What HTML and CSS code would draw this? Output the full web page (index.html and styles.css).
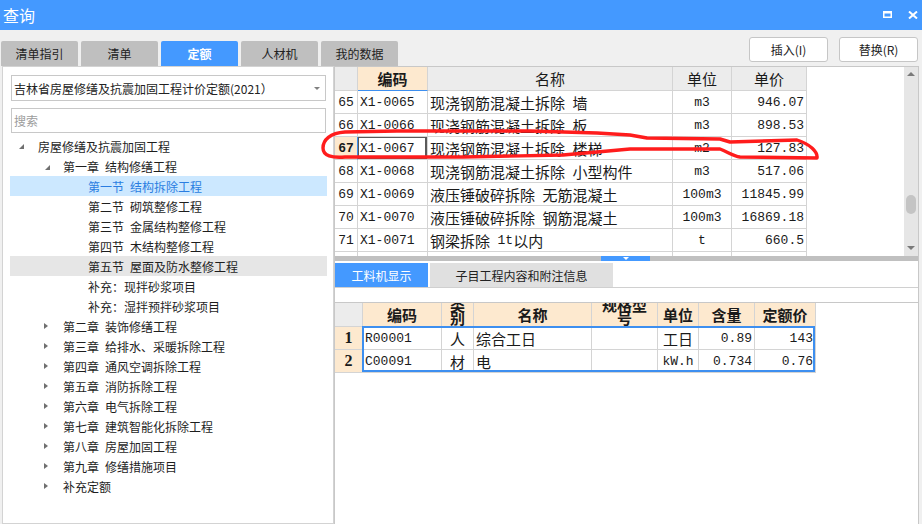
FILE: index.html
```html
<!DOCTYPE html>
<html lang="zh-CN">
<head>
<meta charset="utf-8">
<title>查询</title>
<link rel="stylesheet" href="styles.css">
</head>
<body>
<header class="titlebar">
  <span class="title">查询</span>
  <div class="winbtns">
    <svg class="wicon" width="9" height="7" viewBox="0 0 9 7"><path fill="#fff" fill-rule="evenodd" d="M0 0H9V7H0Z M1.5 2.5V5.5H7.5V2.5Z"/></svg>
    <svg class="wicon" width="10" height="8" viewBox="0 0 10 8"><path d="M1 0.5L9 7.5M9 0.5L1 7.5" stroke="#fff" stroke-width="2"/></svg>
  </div>
</header>
<div class="toolbar">
  <nav class="tabs">
    <div class="tab">清单指引</div>
    <div class="tab">清单</div>
    <div class="tab active">定额</div>
    <div class="tab">人材机</div>
    <div class="tab">我的数据</div>
  </nav>
  <div class="actions">
    <button class="btn">插入(I)</button>
    <button class="btn">替换(R)</button>
  </div>
</div>
<main class="content">
  <aside class="left">
    <div class="select"><span>吉林省房屋修缮及抗震加固工程计价定额(2021）</span><i class="caret"></i></div>
    <div class="search">搜索</div>
    <ul class="tree">
      <li class="node l0"><i class="tw open"></i>房屋修缮及抗震加固工程</li>
      <li class="node l1"><i class="tw open"></i>第一章&ensp;结构修缮工程</li>
      <li class="node l2 sel"><i class="tw"></i>第一节&ensp;结构拆除工程</li>
      <li class="node l2"><i class="tw"></i>第二节&ensp;砌筑整修工程</li>
      <li class="node l2"><i class="tw"></i>第三节&ensp;金属结构整修工程</li>
      <li class="node l2"><i class="tw"></i>第四节&ensp;木结构整修工程</li>
      <li class="node l2 hover"><i class="tw"></i>第五节&ensp;屋面及防水整修工程</li>
      <li class="node l2"><i class="tw"></i>补充：现拌砂浆项目</li>
      <li class="node l2"><i class="tw"></i>补充：湿拌预拌砂浆项目</li>
      <li class="node l1"><i class="tw closed"></i>第二章&ensp;装饰修缮工程</li>
      <li class="node l1"><i class="tw closed"></i>第三章&ensp;给排水、采暖拆除工程</li>
      <li class="node l1"><i class="tw closed"></i>第四章&ensp;通风空调拆除工程</li>
      <li class="node l1"><i class="tw closed"></i>第五章&ensp;消防拆除工程</li>
      <li class="node l1"><i class="tw closed"></i>第六章&ensp;电气拆除工程</li>
      <li class="node l1"><i class="tw closed"></i>第七章&ensp;建筑智能化拆除工程</li>
      <li class="node l1"><i class="tw closed"></i>第八章&ensp;房屋加固工程</li>
      <li class="node l1"><i class="tw closed"></i>第九章&ensp;修缮措施项目</li>
      <li class="node l1"><i class="tw closed"></i>补充定额</li>
    </ul>
  </aside>
  <section class="right">
    <div class="upper">
      <div class="grid1">
        <div class="r1 head">
          <div class="c rn"></div>
          <div class="c hcur">编码</div>
          <div class="c">名称</div>
          <div class="c">单位</div>
          <div class="c">单价</div>
        </div>
        <div class="r1">
          <div class="c rn mono">65</div>
          <div class="c l mono">X1-0065</div>
          <div class="c l">现浇钢筋混凝土拆除&ensp;墙</div>
          <div class="c mono">m3</div>
          <div class="c r mono">946.07</div>
        </div>
        <div class="r1">
          <div class="c rn mono">66</div>
          <div class="c l mono">X1-0066</div>
          <div class="c l">现浇钢筋混凝土拆除&ensp;板</div>
          <div class="c mono">m3</div>
          <div class="c r mono">898.53</div>
        </div>
        <div class="r1">
          <div class="c rn mono cur">67</div>
          <div class="c l mono focus">X1-0067</div>
          <div class="c l">现浇钢筋混凝土拆除&ensp;楼梯</div>
          <div class="c mono">m2</div>
          <div class="c r mono">127.83</div>
        </div>
        <div class="r1">
          <div class="c rn mono">68</div>
          <div class="c l mono">X1-0068</div>
          <div class="c l">现浇钢筋混凝土拆除&ensp;小型构件</div>
          <div class="c mono">m3</div>
          <div class="c r mono">517.06</div>
        </div>
        <div class="r1">
          <div class="c rn mono">69</div>
          <div class="c l mono">X1-0069</div>
          <div class="c l">液压锤破碎拆除&ensp;无筋混凝土</div>
          <div class="c mono">100m3</div>
          <div class="c r mono">11845.99</div>
        </div>
        <div class="r1">
          <div class="c rn mono">70</div>
          <div class="c l mono">X1-0070</div>
          <div class="c l">液压锤破碎拆除&ensp;钢筋混凝土</div>
          <div class="c mono">100m3</div>
          <div class="c r mono">16869.18</div>
        </div>
        <div class="r1">
          <div class="c rn mono">71</div>
          <div class="c l mono">X1-0071</div>
          <div class="c l">钢梁拆除&ensp;<span class="mono">1t</span>以内</div>
          <div class="c mono">t</div>
          <div class="c r mono">660.5</div>
        </div>
        <div class="r1">
          <div class="c rn"></div><div class="c"></div><div class="c"></div><div class="c"></div><div class="c"></div>
        </div>
      </div>
      <div class="vscroll"><i class="arr up"></i><i class="thumb"></i><i class="arr down"></i></div>
    </div>
    <div class="splitter"><div class="grip"></div></div>
    <div class="lower">
      <div class="subtabs">
        <div class="stab active">工料机显示</div>
        <div class="stab wide">子目工程内容和附注信息</div>
      </div>
      <div class="strip"></div>
      <div class="grid2">
        <div class="r2 head">
          <div class="c rn"></div>
          <div class="c">编码</div>
          <div class="c wrap">类别</div>
          <div class="c">名称</div>
          <div class="c wrap">规格型号</div>
          <div class="c">单位</div>
          <div class="c">含量</div>
          <div class="c">定额价</div>
        </div>
        <div class="r2">
          <div class="c rn num">1</div>
          <div class="c l mono">R00001</div>
          <div class="c">人</div>
          <div class="c l">综合工日</div>
          <div class="c"></div>
          <div class="c">工日</div>
          <div class="c r mono">0.89</div>
          <div class="c r mono">143</div>
        </div>
        <div class="r2">
          <div class="c rn num">2</div>
          <div class="c l mono">C00091</div>
          <div class="c">材</div>
          <div class="c l">电</div>
          <div class="c"></div>
          <div class="c mono">kW.h</div>
          <div class="c r mono">0.734</div>
          <div class="c r mono">0.76</div>
        </div>
        <div class="selframe"></div>
      </div>
    </div>
  </section>
</main>
<svg class="annot" width="922" height="524" viewBox="0 0 922 524">
  <path d="M630 135 L597 133 L530 131 L397 131 L345 132 C330 133 323 140 323 148 C323 156 332 158 345 157 L463 157 L563 155 L597 152 L630 149 L720 149 C728 152 733 156 740 157 L817 158 C818 152 810 144 797 140 L730 142 L720 139 L647 138 Z" fill="none" stroke="#ff1c1c" stroke-width="3.4" stroke-linejoin="round" stroke-linecap="round"/>
</svg>
</body>
</html>
```

FILE: styles.css
```css
* { box-sizing: border-box; margin: 0; padding: 0; }
html, body { width: 922px; height: 524px; }
body {
  position: relative;
  overflow: hidden;
  background: #f0f0f0;
  font-family: "Noto Sans CJK SC", "Noto Sans", sans-serif;
  color: #1e1e1e;
}

/* title bar */
.titlebar {
  height: 30px;
  background: #4499ff;
  display: flex;
  align-items: center;
  justify-content: space-between;
  padding: 0 4px 0 3px;
}
.title { color: #fff; font-size: 16px; line-height: 1; }
.winbtns { display: flex; align-items: center; gap: 16px; margin-top: -1px; }
.wicon { display: block; }

/* tab strip + buttons */
.toolbar {
  height: 36px;
  display: flex;
  justify-content: space-between;
  align-items: flex-start;
  padding: 0 4px 0 1px;
}
.tabs { display: flex; gap: 3px; margin-top: 11px; }
.tab {
  width: 77px;
  height: 25px;
  background: #bfbfbf;
  border-radius: 2px 2px 0 0;
  font-size: 12px;
  display: flex;
  align-items: center;
  justify-content: center;
  color: #222;
}
.tab.active { background: #4499ff; color: #fff; font-weight: 700; }
.actions { display: flex; gap: 11px; margin-top: 7px; }
.btn {
  width: 79px;
  height: 25px;
  background: #fff;
  border: 1px solid #c6c6c6;
  border-radius: 3px;
  font-family: inherit;
  font-size: 12px;
  color: #222;
}

/* main area */
.content { display: flex; height: 458px; }

.left {
  width: 332px;
  margin-left: 2px;
  background: #fff;
  border: 1px solid #d3d3d3;
  padding: 8px 7px 0 8px;
  flex: none;
}
.select {
  height: 26px;
  border: 1px solid #c8c8c8;
  padding: 0 5px 0 2px;
  font-size: 12px;
  display: flex;
  align-items: center;
  justify-content: space-between;
  color: #222;
}
.caret {
  width: 0; height: 0;
  border-top: 3px solid #808080;
  border-left: 3px solid transparent;
  border-right: 3px solid transparent;
}
.search {
  margin-top: 7px;
  height: 25px;
  border: 1px solid #c8c8c8;
  padding-left: 2px;
  font-size: 12px;
  color: #9c9c9c;
  display: flex;
  align-items: center;
}
.tree { list-style: none; margin: 3px -1px 0 -1px; }
.node {
  height: 20px;
  display: flex;
  align-items: center;
  font-size: 12px;
  color: #1e1e1e;
  white-space: nowrap;
}
.node.l0 { padding-left: 5px; }
.node.l1 { padding-left: 30px; }
.node.l2 { padding-left: 55px; }
.node.sel { background: #cce8ff; color: #2a7de1; }
.node.hover { background: #e6e6e6; }
.tw { width: 23px; height: 20px; position: relative; flex: none; }
.tw.open::before {
  content: "";
  position: absolute;
  left: 4px; top: 8px;
  border-bottom: 5px solid #707070;
  border-left: 5px solid transparent;
}
.l1 .tw.open::before { left: 5px; top: 9px; }
.tw.closed::before {
  content: "";
  position: absolute;
  left: 4px; top: 7px;
  border-left: 4px solid #707070;
  border-top: 3.5px solid transparent;
  border-bottom: 3.5px solid transparent;
}

/* right side */
.right {
  width: 585px;
  border-left: 1px solid #c8c8c8;
  border-right: 1px solid #c8c8c8;
  display: flex;
  flex-direction: column;
  flex: none;
}
.upper {
  height: 190px;
  border-top: 1px solid #c8c8c8;
  background: #fff;
  display: flex;
}
.grid1 { flex: 1; overflow: hidden; }
.r1 {
  display: grid;
  grid-template-columns: 23px 70px 245px 59px 75px;
  height: 23px;
  width: 472px;
}
.r1.head { height: 24px; }
.c {
  border-right: 1px solid #d4d4d4;
  border-bottom: 1px solid #d4d4d4;
  display: flex;
  align-items: center;
  justify-content: center;
  padding: 0 2px;
  overflow: hidden;
  white-space: nowrap;
  font-size: 15px;
  line-height: 1;
  color: #1a1a1a;
}
.c.l { justify-content: flex-start; }
.c.r { justify-content: flex-end; }
.mono { font-family: "Liberation Mono", "Noto Sans CJK SC", monospace; font-size: 13px; }
.r1.head .c { background: #ececec; }
.r1.head .c.hcur {
  background: #fde9cf;
  font-weight: 700;
  border-bottom-color: #3d8ff0;
}
.c.rn.cur {
  background: #fde9cf;
  font-weight: 700;
  border-right-color: #3d8ff0;
}
.c.focus { box-shadow: inset 1px 1px 0 #5a5a5a, inset -2px -1px 0 #5a5a5a; }

.vscroll {
  width: 14px;
  flex: none;
  background: #e6e6e6;
  position: relative;
}
.arr {
  position: absolute;
  left: 3px;
  width: 0; height: 0;
  border-left: 4px solid transparent;
  border-right: 4px solid transparent;
}
.arr.up { top: 5px; border-bottom: 4px solid #7a7a7a; }
.arr.down { bottom: 6px; border-top: 4px solid #7a7a7a; }
.thumb {
  position: absolute;
  left: 2px;
  top: 128px;
  width: 10px;
  height: 19px;
  border-radius: 5px;
  background: #c4c4c4;
}

.splitter { height: 5px; background: #c0c0c0; }
.grip {
  margin-left: 266px;
  width: 49px;
  height: 5px;
  background: #4499ff;
  position: relative;
}
.grip::after {
  content: "";
  position: absolute;
  left: 22px; top: 1px;
  border-top: 3px solid #fff;
  border-left: 3px solid transparent;
  border-right: 3px solid transparent;
}

.lower { flex: 1; background: #fff; }
.subtabs {
  height: 27px;
  padding-top: 2px;
  display: flex;
  gap: 2px;
  border-bottom: 1px solid #d0d0d0;
}
.stab {
  width: 93px;
  height: 24px;
  background: #e0e0e0;
  font-size: 12px;
  display: flex;
  align-items: center;
  justify-content: center;
  color: #222;
}
.stab.wide { width: 183px; }
.stab.active { background: #4499ff; color: #fff; }
.strip { height: 14px; }
.grid2 {
  position: relative;
  border-top: 1px solid #c8c8c8;
}
.r2 {
  display: grid;
  grid-template-columns: 28px 79px 32px 118px 66px 41px 56px 61px;
  height: 23px;
  width: 481px;
}
.r2.head { height: 24px; }
.r2.head .c {
  background: #fde9cf;
  font-weight: 700;
  padding: 0 4px;
}
.r2.head .c.rn { background: #ececec; }
.r2.head .c.wrap {
  white-space: normal;
  line-height: 13px;
  text-align: center;
  padding-bottom: 8px;
}
.c.num {
  background: #fde9cf;
  font-weight: 700;
  font-family: "Liberation Serif", serif;
  font-size: 16px;
}
.selframe {
  position: absolute;
  left: 27px;
  top: 23px;
  width: 453px;
  height: 46px;
  border: 2px solid #3d8ff0;
}

.annot {
  position: absolute;
  left: 0;
  top: 0;
  pointer-events: none;
}
```
